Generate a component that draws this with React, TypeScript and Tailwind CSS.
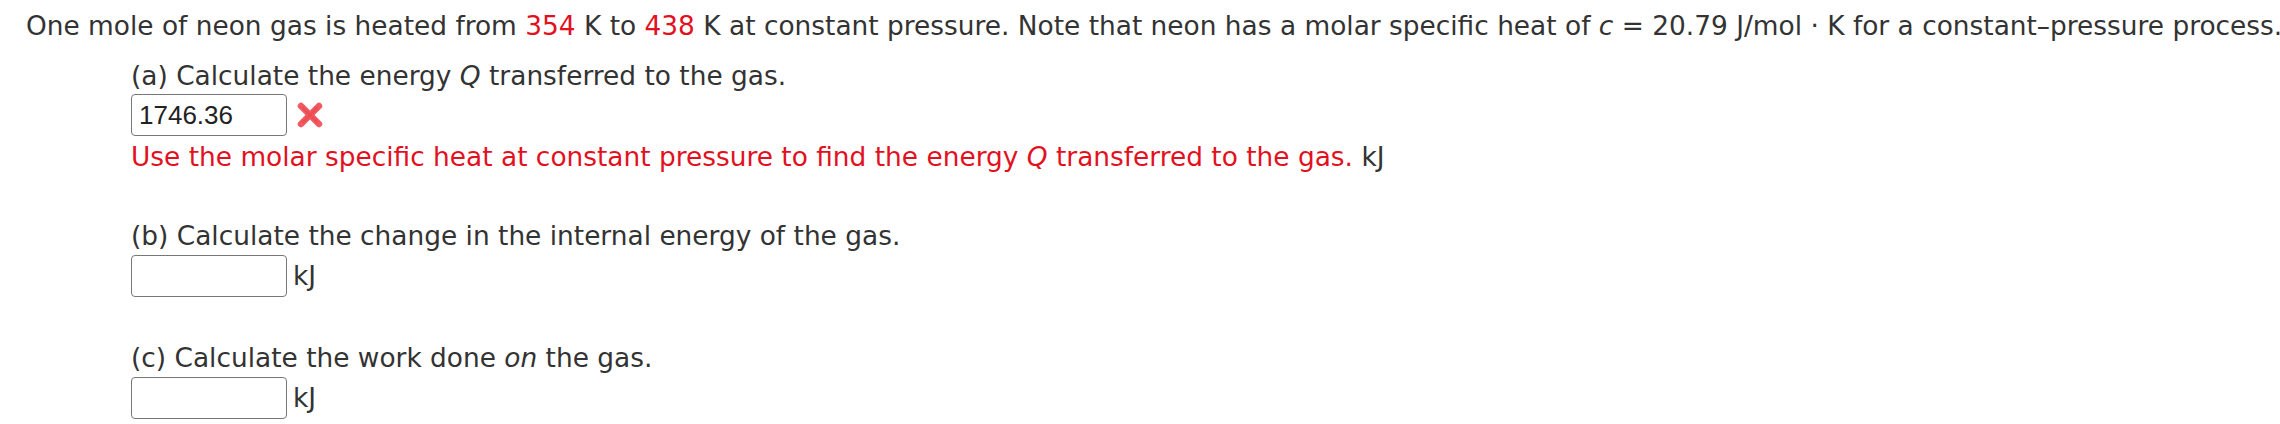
import React from "react";

const RED = "text-[#e2111f]";

function XMark() {
  return (
    <svg width="28" height="28" viewBox="0 0 28 28" className="shrink-0">
      <g stroke="#f15a60" strokeWidth="6.5" strokeLinecap="round">
        <line x1="5" y1="5" x2="23" y2="23" />
        <line x1="23" y1="5" x2="5" y2="23" />
      </g>
      <g stroke="#e8434c" strokeWidth="2.5" strokeLinecap="round" opacity="0.5">
        <line x1="7" y1="7" x2="21" y2="21" />
        <line x1="21" y1="7" x2="7" y2="21" />
      </g>
    </svg>
  );
}

function Box({ value }: { value?: string }) {
  return (
    <div className="w-[156px] h-[42px] rounded-[4px] border-[1.5px] border-[#777777] bg-white flex items-center pl-[7px] shrink-0">
      {value && (
        <span className="text-[26px] text-[#222222] [font-family:'Liberation_Sans',Arial,sans-serif]">
          {value}
        </span>
      )}
    </div>
  );
}

export default function App() {
  return (
    <div className="w-[2280px] h-[424px] bg-white overflow-hidden whitespace-nowrap text-[#333333] text-[26.4px] leading-[36px] [font-family:'DejaVu_Sans',Verdana,sans-serif] pl-[26px] pt-[8px]">
      <div>
        One mole of neon gas is heated from <span className={RED}>354</span> K to{" "}
        <span className={RED}>438</span> K at constant pressure. Note that neon has a molar specific heat of{" "}
        <i>c</i> = 20.79 J/mol · K for a constant–pressure process.
      </div>
      <div className="ml-[105px]">
        <div className="mt-[14px]">
          (a) Calculate the energy <i>Q</i> transferred to the gas.
        </div>
        <div className="mt-[0px] flex items-center gap-[9px]">
          <Box value="1746.36" />
          <XMark />
        </div>
        <div className="mt-[3px]">
          <span className={RED}>
            Use the molar specific heat at constant pressure to find the energy <i>Q</i> transferred to the gas.
          </span>{" "}
          kJ
        </div>
        <div className="mt-[43px]">(b) Calculate the change in the internal energy of the gas.</div>
        <div className="mt-[1px] flex items-center gap-[6px]">
          <Box />
          <span>kJ</span>
        </div>
        <div className="mt-[43px]">
          (c) Calculate the work done <i>on</i> the gas.
        </div>
        <div className="mt-[1px] flex items-center gap-[6px]">
          <Box />
          <span>kJ</span>
        </div>
      </div>
    </div>
  );
}
